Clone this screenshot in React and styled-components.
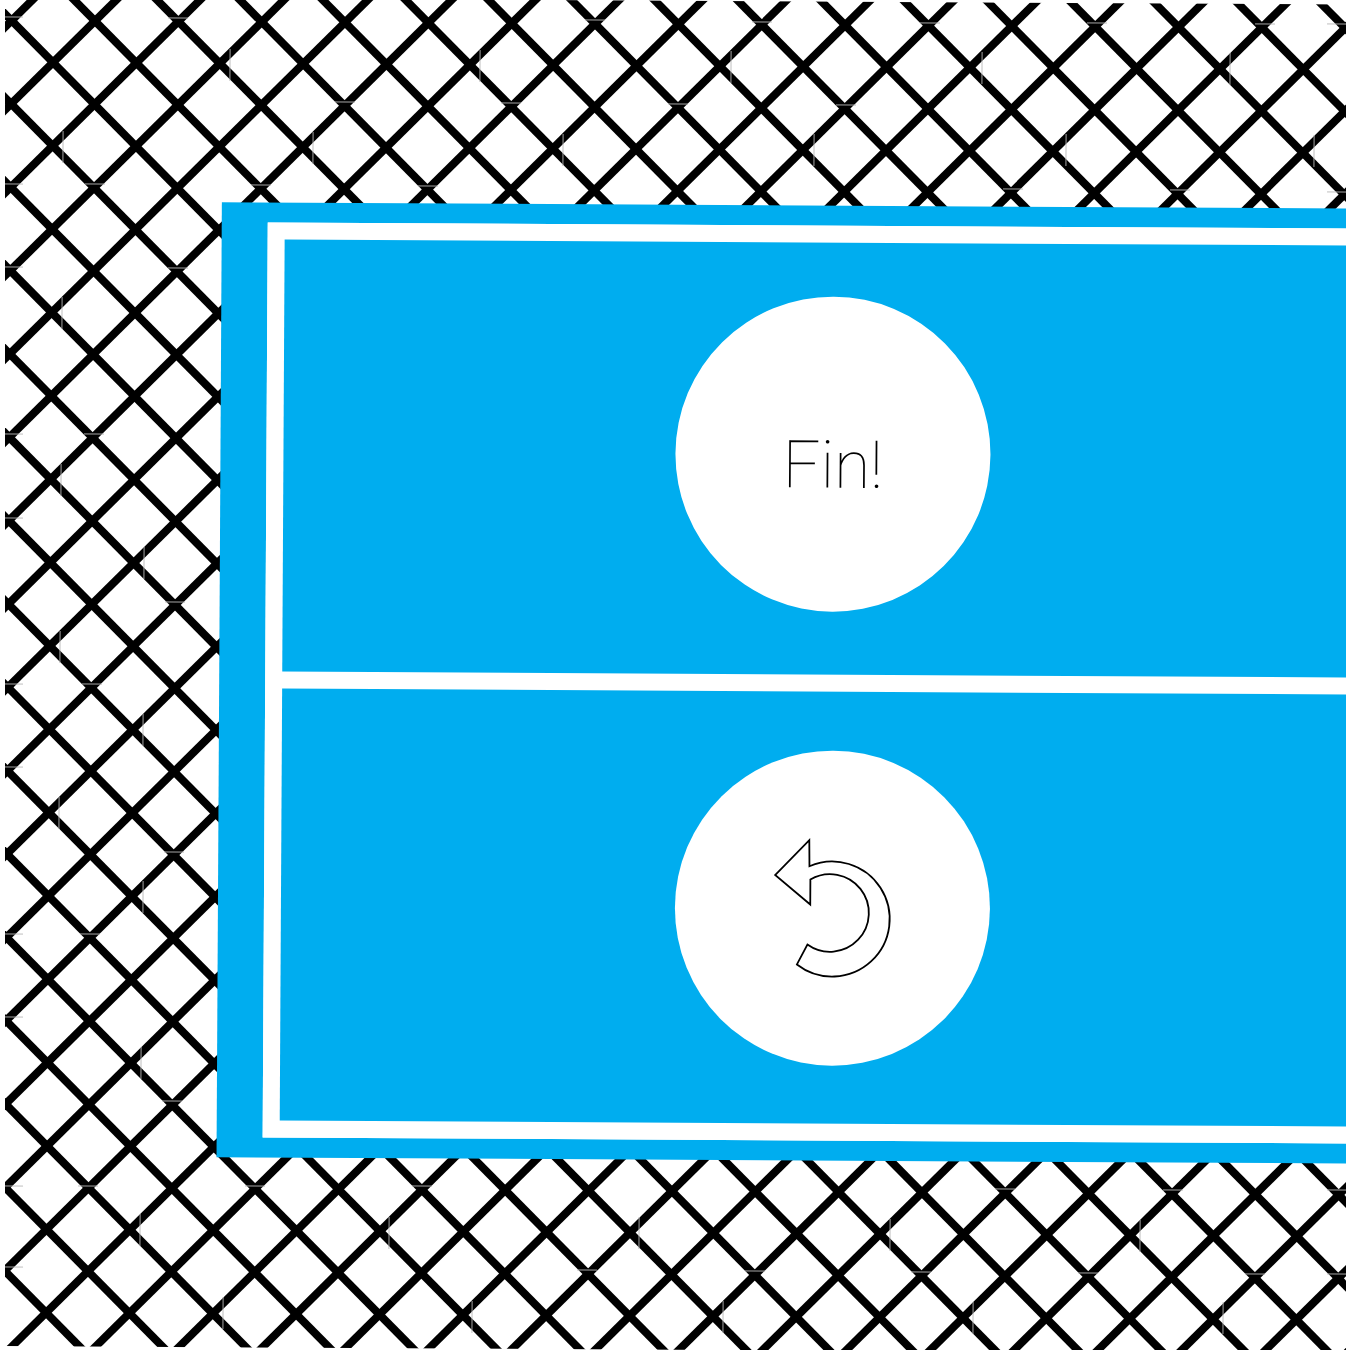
import React from "react";
import styled, { createGlobalStyle } from "styled-components";

const Global = createGlobalStyle`
  html, body { margin: 0; padding: 0; background: #fff; }
  body { overflow: hidden; font-family: Roboto, "Liberation Sans", sans-serif; }
`;

const Clip = styled.div`
  width: 1341px;
  height: 1350px;
  margin-left: 5px;
  overflow: hidden;
`;

const Stage = styled.main`
  position: relative;
  box-sizing: border-box;
  width: 1400px;
  height: 1349px;
  margin-top: -3px;
  padding: 204px 0 0 218px;
  background: #fff;
  transform-origin: 0 0;
  transform: rotate(0.32deg);
`;

const LatticeSvg = styled.svg`
  position: absolute;
  inset: 0;
  display: block;
`;

const Panel = styled.section`
  position: relative;
  box-sizing: border-box;
  width: 1224px;
  height: 955px;
  padding: 20px 46px;
  background: #00adef;
`;

const Frame = styled.div`
  display: grid;
  grid-template-rows: 1fr 1fr;
  gap: 17px;
  height: 100%;
  box-sizing: border-box;
  border: 17px solid #fff;
  background: #fff;
`;

const Cell = styled.div`
  display: flex;
  align-items: center;
  justify-content: center;
  background: #00adef;
`;

const Disc = styled.button`
  display: flex;
  align-items: center;
  justify-content: center;
  width: 315px;
  height: 315px;
  margin: 0 0 ${(p) => p.$lift}px ${(p) => p.$shift}px;
  padding: 0;
  border: 0;
  border-radius: 50%;
  background: #fff;
  color: #000;
`;

const Label = styled.span`
  padding: 23px 0 0 1px;
  font-family: Roboto, sans-serif;
  font-weight: 100;
  font-size: 66px;
  line-height: 1;
`;

const UndoSvg = styled.svg`
  display: block;
  margin: 0 0 6px 5px;
`;

const P = 83.35;
const X0 = 90.1;
const Y0 = 23.5;
const W = 1400;
const H = 1349;
const S = 0.0056;

const toStage = ([x, y]) => [x - 5 + (y + 3) * S, y + 3 - (x - 5) * S];

/* Faint tile seams of the original pattern, in screenshot coordinates. */
const H_SEAMS = [
  [13, 17], [178, 18], [595, 20], [762, 22], [930, 23], [1097, 23], [1265, 24], [1337, 24],
  [345, 102], [511, 103], [678, 104], [846, 105],
  [13, 184], [95, 184], [261, 185], [428, 186], [1013, 189], [1180, 190], [1337, 192],
  [13, 267], [178, 268], [13, 434], [94, 434], [13, 518], [175, 602], [13, 684], [92, 684],
  [13, 767], [174, 852], [13, 934], [90, 934], [13, 1017], [172, 1101],
  [13, 1186], [88, 1186], [255, 1186], [422, 1186], [1005, 1189], [1173, 1190], [1337, 1190],
  [13, 1267], [587, 1270], [755, 1271], [921, 1272], [1088, 1273], [1255, 1274], [1337, 1274],
];
const V_SEAMS = [
  [230, 65], [480, 66], [731, 67], [982, 68], [1230, 69],
  [63, 147], [313, 148], [563, 150], [814, 150], [1066, 150], [1314, 151],
  [62, 313], [61, 480], [144, 563], [60, 647], [143, 730], [59, 813], [143, 897], [141, 1063],
  [140, 1230], [389, 1233], [639, 1233], [890, 1235], [1140, 1236],
  [223, 1313], [472, 1317], [723, 1317], [973, 1318], [1223, 1318],
];

function Lattice() {
  const lines = [];
  for (let k = -20; k < 40; k++) {
    const c = X0 - Y0 + k * P;
    lines.push(<line key={"a" + k} x1={c - 100} y1={-100} x2={c + H + 100} y2={H + 100} />);
    const d = X0 + Y0 + k * P;
    lines.push(<line key={"b" + k} x1={d + 100} y1={-100} x2={d - H - 100} y2={H + 100} />);
  }
  return (
    <LatticeSvg width={W} height={H} viewBox={`0 0 ${W} ${H}`}>
      <g stroke="#000" strokeWidth="8">{lines}</g>
      <g stroke="#b8b8b8" strokeWidth="0.9">
        {H_SEAMS.map((p) => {
          const [u, v] = toStage(p);
          return <line key={"h" + p} x1={u - 10} y1={v} x2={u + 10} y2={v} />;
        })}
        {V_SEAMS.map((p) => {
          const [u, v] = toStage(p);
          return <line key={"v" + p} x1={u} y1={v - 16} x2={u} y2={v + 16} />;
        })}
      </g>
    </LatticeSvg>
  );
}

function UndoIcon() {
  return (
    <UndoSvg width="170" height="170" viewBox="0 0 170 170">
      <path
        d="M25 55.7 L59 20.7 L59.3 46.7 A57.5 57.5 0 1 1 47.3 145 L57.7 125 A38.8 38.8 0 1 0 60.3 60 L60.3 85 Z"
        fill="#fff"
        stroke="#000"
        strokeWidth="1.8"
        strokeLinejoin="miter"
      />
    </UndoSvg>
  );
}

export default function App() {
  return (
    <>
      <Global />
      <Clip>
        <Stage>
          <Lattice />
          <Panel>
            <Frame>
              <Cell>
                <Disc $lift={10} $shift={0}>
                  <Label>Fin!</Label>
                </Disc>
              </Cell>
              <Cell>
                <Disc $lift={0} $shift={4}>
                  <UndoIcon />
                </Disc>
              </Cell>
            </Frame>
          </Panel>
        </Stage>
      </Clip>
    </>
  );
}
